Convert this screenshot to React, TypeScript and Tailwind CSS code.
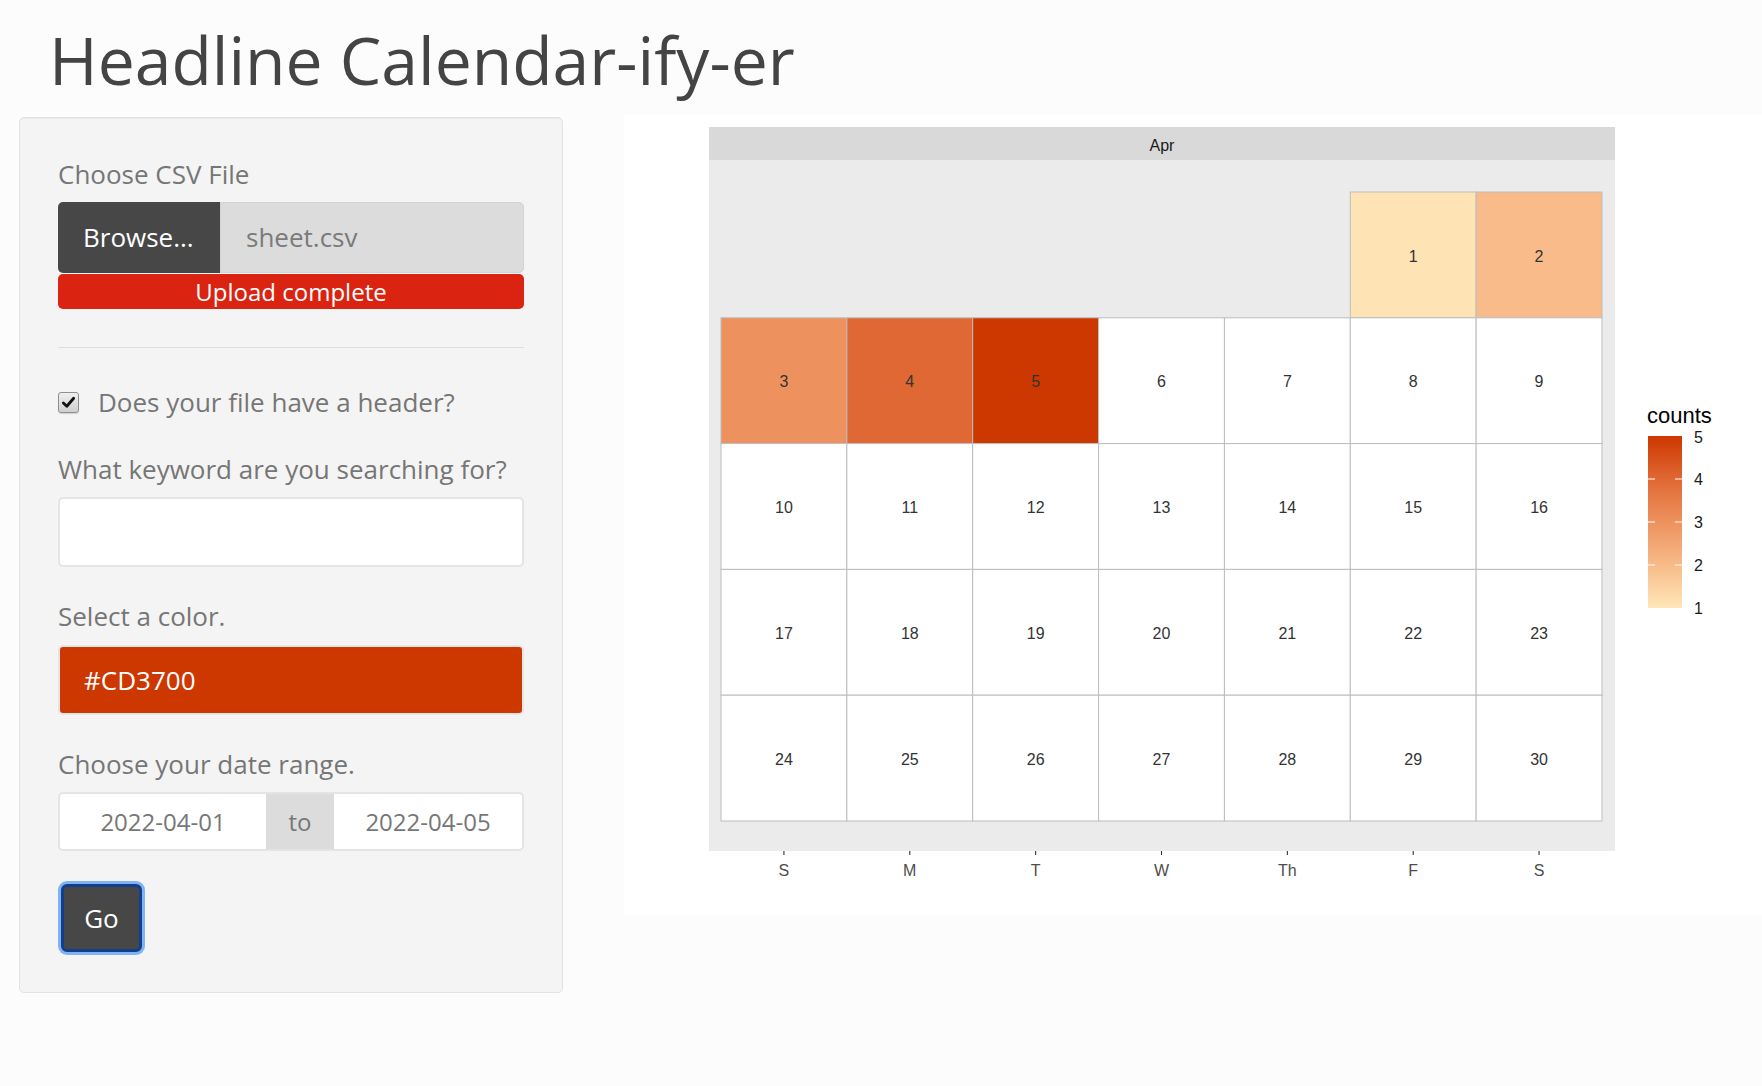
import React from "react";

const DAYS = ["S", "M", "T", "W", "Th", "F", "S"];
const FILL: Record<number, string> = {
  1: "#FEE3B4",
  2: "#F8BB89",
  3: "#ED925E",
  4: "#E06834",
  5: "#CD3700",
};

// plot geometry (px inside the white plot box)
const PX = 85;
const PW = 906;
const GX = 97;
const GY = 77;
const CW = 881 / 7;
const CH = 629 / 5;

function CalendarPlot() {
  const cells = [];
  for (let d = 1; d <= 30; d++) {
    const idx = d + 4; // April 1st 2022 is a Friday
    const col = idx % 7;
    const row = Math.floor(idx / 7);
    cells.push({ d, col, row, fill: FILL[d] ?? "#ffffff" });
  }

  return (
    <svg width={1138} height={800} className="block font-['Liberation_Sans',Arial,sans-serif]">
      <defs>
        <linearGradient id="counts" x1="0" y1="1" x2="0" y2="0">
          <stop offset="0" stopColor="#FEE6B8" />
          <stop offset="0.25" stopColor="#F8BB89" />
          <stop offset="0.5" stopColor="#ED925E" />
          <stop offset="0.75" stopColor="#E06834" />
          <stop offset="1" stopColor="#CD3700" />
        </linearGradient>
      </defs>

      {/* facet strip */}
      <rect x={PX} y={12} width={PW} height={33} fill="#d9d9d9" />
      <text x={PX + PW / 2} y={30.5} dy="0.35em" textAnchor="middle" fontSize={16} fill="#1a1a1a">
        Apr
      </text>

      {/* panel */}
      <rect x={PX} y={45} width={PW} height={691} fill="#ebebeb" />

      {cells.map((c) => (
        <g key={c.d}>
          <rect
            x={GX + c.col * CW}
            y={GY + c.row * CH}
            width={CW}
            height={CH}
            fill={c.fill}
            stroke="#bdbdbd"
            strokeWidth={1}
          />
          <text
            x={GX + (c.col + 0.5) * CW}
            y={GY + (c.row + 0.5) * CH + 1}
            dy="0.35em"
            textAnchor="middle"
            fontSize={16}
            fill="#333333"
          >
            {c.d}
          </text>
        </g>
      ))}

      {/* x axis */}
      {DAYS.map((lab, i) => (
        <g key={i}>
          <line x1={GX + (i + 0.5) * CW} x2={GX + (i + 0.5) * CW} y1={736} y2={740} stroke="#333" strokeWidth={1.1} />
          <text x={GX + (i + 0.5) * CW} y={755} dy="0.35em" textAnchor="middle" fontSize={16} fill="#4d4d4d">
            {lab}
          </text>
        </g>
      ))}

      {/* legend */}
      <text x={1023} y={308} fontSize={22} fill="#000">
        counts
      </text>
      <rect x={1024} y={321} width={34} height={172} fill="url(#counts)" />
      {[364, 407, 450].map((y) => (
        <g key={y}>
          <line x1={1024} x2={1031} y1={y} y2={y} stroke="#fff" strokeWidth={1} />
          <line x1={1051} x2={1058} y1={y} y2={y} stroke="#fff" strokeWidth={1} />
        </g>
      ))}
      {[5, 4, 3, 2, 1].map((v, i) => (
        <text key={v} x={1070} y={322 + i * 42.8} dy="0.35em" fontSize={16} fill="#1a1a1a">
          {v}
        </text>
      ))}
    </svg>
  );
}

function Label({ children, className = "" }: { children: React.ReactNode; className?: string }) {
  return <div className={`text-[26px] leading-[36px] text-[#767676] ${className}`}>{children}</div>;
}

function Sidebar() {
  return (
    <div className="ml-[19px] mt-[2px] w-[544px] rounded-[5px] border border-[#e3e3e3] bg-[#f4f4f4] px-[38px] pb-[40px] pt-[38px] shadow-[inset_0_1px_1px_rgba(0,0,0,0.05)]">
      <Label>Choose CSV File</Label>

      <div className="mt-[10px] flex h-[71px] text-[26px]">
        <div className="flex w-[162px] items-center rounded-l-[5px] bg-[#474747] pl-[25px] text-white">Browse...</div>
        <div className="flex flex-1 items-center rounded-r-[5px] border border-[#d2d2d2] bg-[#dcdcdc] pl-[25px] text-[#7a7a7a]">
          sheet.csv
        </div>
      </div>
      <div className="mt-px h-[35px] rounded-[5px] bg-[#da2311] text-center text-[24px] leading-[35px] text-white">
        Upload complete
      </div>

      <div className="mt-[38px] h-px bg-[#dedede]" />

      <div className="mt-[36px] flex h-[36px] items-center">
        <span className="flex h-[21px] w-[21px] items-center justify-center rounded-[3px] border border-[#8f8f8f] bg-linear-to-b from-[#f0f0f0] to-[#cfcfcf] shadow-[0_1px_1px_rgba(0,0,0,0.15)]">
          <svg width="15" height="15" viewBox="0 0 16 16">
            <path d="M2.5 8.5 L6.2 12 L13.5 3.5" fill="none" stroke="#111" strokeWidth="3" strokeLinecap="round" strokeLinejoin="round" />
          </svg>
        </span>
        <span className="ml-[19px] text-[26px] leading-[36px] text-[#767676]">Does your file have a header?</span>
      </div>

      <Label className="mt-[31px]">What keyword are you searching for?</Label>
      <div className="mt-[10px] h-[70px] rounded-[5px] border-2 border-[#e4e4e4] bg-white" />

      <Label className="mt-[31px]">Select a color.</Label>
      <div className="mt-[11px] flex h-[70px] items-center rounded-[5px] border-2 border-[#e6e6e6] bg-[#CD3700] pl-[24px] text-[26px] text-white">
        #CD3700
      </div>

      <Label className="mt-[31px]">Choose your date range.</Label>
      <div className="mt-[10px] flex h-[59px] overflow-hidden rounded-[5px] border-2 border-[#e4e4e4] bg-white text-[24px] text-[#777]">
        <div className="flex w-[206px] items-center justify-center">2022-04-01</div>
        <div className="flex w-[68px] items-center justify-center bg-[#dcdcdc]">to</div>
        <div className="flex flex-1 items-center justify-center">2022-04-05</div>
      </div>

      <button className="ml-[3px] mt-[33px] flex h-[68px] w-[81px] items-center justify-center rounded-[6px] border-[3px] border-[#123f8c] bg-[#474747] text-[26px] text-white ring-[3px] ring-[#80b2f6]">
        Go
      </button>
    </div>
  );
}

export default function App() {
  return (
    <div className="min-h-screen bg-[#fcfcfc] font-['Open_Sans',sans-serif]">
      <div className="h-[115px] pl-[49px] pt-[23px] text-[66px] leading-[72px] text-[#444]">Headline Calendar-ify-er</div>
      <div className="flex items-start">
        <Sidebar />
        <div className="ml-[61px] w-[1138px] bg-white">
          <CalendarPlot />
        </div>
      </div>
    </div>
  );
}
